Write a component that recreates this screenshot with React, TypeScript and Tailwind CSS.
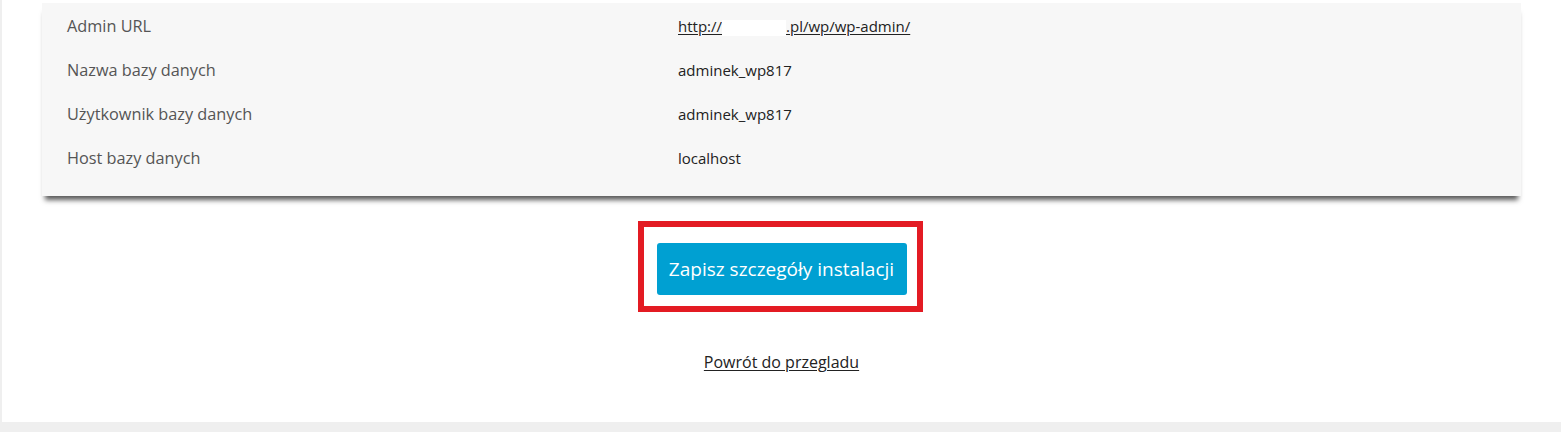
const ROWS = [
  { label: 'Nazwa bazy danych', value: 'adminek_wp817' },
  { label: 'Użytkownik bazy danych', value: 'adminek_wp817' },
  { label: 'Host bazy danych', value: 'localhost' },
];

export default function App() {
  return (
    <div className="min-h-[432px] bg-[#efefef] pl-[2px] font-['Open_Sans',sans-serif]">
      <div className="bg-white h-[422px] pt-[3px] px-[40px]">
        {/* details card */}
        <div className="bg-[#f7f7f7] pt-[1px] pb-[16px] shadow-[0_7px_5px_-3px_rgba(0,0,0,0.65)]">
          <div className="flex h-[44px] items-center">
            <div className="w-[636px] pl-[25px] text-[16.3px] text-[#555]">Admin URL</div>
            <div className="text-[15px] text-[#222]">
              <a href="#" className="underline underline-offset-2">
                http://
                <span className="inline-block w-[64px] h-[16px] bg-white align-middle" />
                .pl/wp/wp-admin/
              </a>
            </div>
          </div>
          {ROWS.map((row) => (
            <div key={row.label} className="flex h-[44px] items-center">
              <div className="w-[636px] pl-[25px] text-[16.3px] text-[#555]">{row.label}</div>
              <div className="text-[15px] text-[#222]">{row.value}</div>
            </div>
          ))}
        </div>

        <div className="flex justify-center mt-[25px]">
          <div className="mr-[3px] border-[6px] border-[#e31b23] pt-[16px] pb-[11px] pl-[13px] pr-[10px]">
            <button className="w-[250px] h-[52px] bg-[#00a0d2] rounded-[3px] text-white text-[19px]">
              Zapisz szczegóły instalacji
            </button>
          </div>
        </div>

        <div className="flex justify-center mt-[38px]">
          <a href="#" className="text-[16px] text-[#222] underline underline-offset-2">
            Powrót do przegladu
          </a>
        </div>
      </div>
    </div>
  );
}
